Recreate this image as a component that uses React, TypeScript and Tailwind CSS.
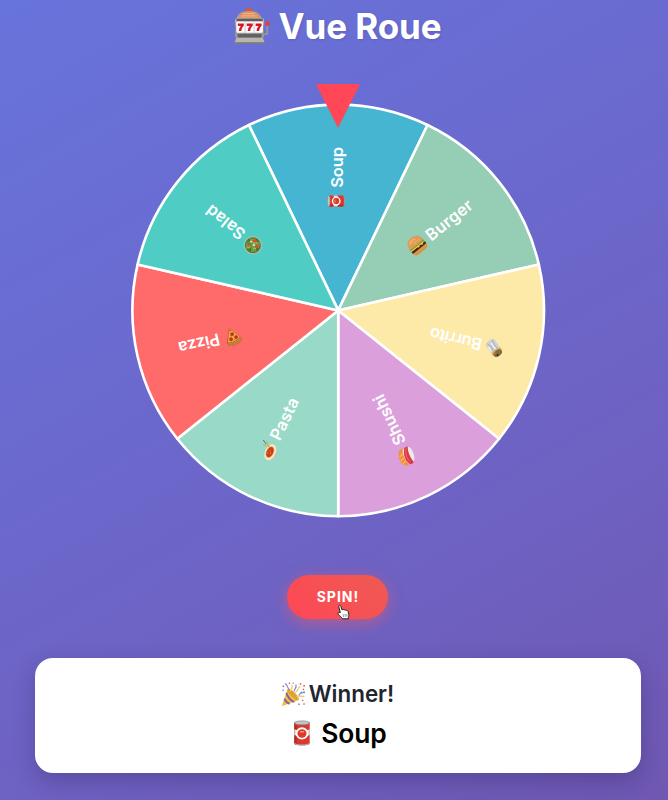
import React from "react";

type IconProps = { x?: number; y?: number; size?: number; className?: string };

function Icon({ x, y, size = 17, className, children }: IconProps & { children: React.ReactNode }) {
  return (
    <svg x={x} y={y} width={size} height={size} viewBox="0 0 32 32" className={className}>
      {children}
    </svg>
  );
}

function SlotMachine(p: IconProps) {
  return (
    <Icon {...p}>
      <defs>
        <linearGradient id="slotMetal" x1="0" x2="0" y1="0" y2="1">
          <stop offset="0" stopColor="#d8d0c4" />
          <stop offset="0.5" stopColor="#8d8a86" />
          <stop offset="1" stopColor="#a5a29c" />
        </linearGradient>
      </defs>
      <ellipse cx="13" cy="2" rx="3.200" ry="1.900" fill="#d8563d" />
      <path d="M3 9c.3-3.500 3-5.800 10-5.800s9.800 2.300 10.200 5.800z" fill="#e08a55" stroke="#b8aaa0" strokeWidth=".8" />
      <path d="M8 4.800h10M6 6.800h14" stroke="#f6b47d" strokeWidth="1" />
      <rect x="1" y="8.500" width="25" height="18" rx="3" fill="url(#slotMetal)" />
      <rect x="2" y="9" width="23" height="2.300" rx="1" fill="#5d5d60" />
      <rect x="2" y="11.800" width="23" height="9.700" rx="1" fill="#fff" />
      <path d="M9.600 11.800v9.700M17.300 11.800v9.700" stroke="#bbb" strokeWidth=".7" />
      <path
        d="M3.300 13.300h5.200v2c-1.500 1.500-2 2.500-2.100 4.500H4.200c.1-1.800.6-3 1.800-4.200H3.300zM11 13.300h5.200v2c-1.500 1.500-2 2.500-2.100 4.500h-2.200c.1-1.800.6-3 1.800-4.200H11zM18.700 13.300h5.200v2c-1.500 1.500-2 2.500-2.100 4.500h-2.200c.1-1.800.6-3 1.800-4.200h-2.700z"
        fill="#dc1226"
      />
      <rect x="3" y="22.500" width="21" height="3" rx="1" fill="#606164" />
      <path d="M2 26h23l1.700 4.500H.3z" fill="#b9b7ad" />
      <path d="M.3 30.200h26.500" stroke="#77756f" strokeWidth="1.200" />
      <path d="M26 22.500h2.800V15" fill="none" stroke="#98969a" strokeWidth="1.500" />
      <circle cx="28.900" cy="13.500" r="2.100" fill="#e23f3d" />
    </Icon>
  );
}

function Can(p: IconProps) {
  return (
    <Icon {...p}>
      <path d="M6.500 3.500v25c0 3.500 19 3.500 19 0v-25z" fill="#d9392e" />
      <path d="M6.500 3.500v25c0 1.300 1.400 2 3 2.400V3.500z" fill="#b52a24" />
      <path d="M6.500 11.500c4 2 15 2 19 0v7c-4 2-15 2-19 0z" fill="#e4dcd6" />
      <circle cx="16" cy="16.500" r="7.600" fill="#fff" />
      <ellipse cx="16" cy="16.500" rx="5.600" ry="5.200" fill="#dc3b2b" />
      <path d="M13.500 15c2-1.500 3.500-.5 5-.2" stroke="#ff9c83" strokeWidth="1.500" fill="none" />
      <ellipse cx="16" cy="3.500" rx="9.500" ry="2.400" fill="#c0c5c6" stroke="#85898b" strokeWidth=".9" />
      <path d="M6.500 28.500c2 3 17 3 19 0" fill="none" stroke="#b1aaa7" strokeWidth="1.300" />
    </Icon>
  );
}

function Burger(p: IconProps) {
  return (
    <Icon {...p}>
      <path d="M1 23h30c0 5-3 8-7 8H8c-4 0-7-3-7-8z" fill="#d99448" />
      <rect x=".8" y="19.500" width="30.400" height="4.500" rx="2.200" fill="#4b2517" />
      <path d="M1 17h30l-7 5-4-3-3 3-3-2H2z" fill="#f8c932" />
      <path d="M.5 16c2-2 4 1 6-.5s4 1.500 6 0 4 1.500 6 0 4 1.500 6 0 4 1 7 .5v2H.5z" fill="#67a23b" />
      <path d="M1 15C1 6 7 .5 16 .5S31 6 31 15c0 1.500-30 1.500-30 0z" fill="#e29a54" />
      <path d="M6 9c3-4 8-5 13-4" stroke="#f3b870" strokeWidth="2" fill="none" />
      <path d="M11 8h2M18 7h2M22 11h2M15 11h2" stroke="#ffe5ae" strokeWidth="1.400" />
    </Icon>
  );
}

function Burrito(p: IconProps) {
  return (
    <Icon {...p}>
      <g transform="rotate(-48 16 16)">
        <path d="M7 8h18v22c-4 3-14 3-18 0z" fill="#cfd1d3" />
        <path d="M11 13l2 6-2 11M21 14l-2 6 2 9" stroke="#999da0" strokeWidth="1.200" fill="none" />
        <path d="M15 13v14M23 14v10" stroke="#f4f5f5" strokeWidth="2" />
        <path d="M6.500 10C5-1.500 27-1.500 25.500 10c-3 5-16 5-19 0z" fill="#d9ad70" />
        <ellipse cx="16" cy="5.800" rx="8" ry="5.200" fill="#5f7b3b" />
        <circle cx="12.500" cy="6" r="2.700" fill="#d34833" />
        <circle cx="18" cy="3.500" r="2" fill="#49301f" />
        <circle cx="19.500" cy="8" r="2" fill="#e05a40" />
      </g>
    </Icon>
  );
}

function Sushi(p: IconProps) {
  return (
    <Icon {...p}>
      <path d="M3 9c7-5 18-4 26 4v8H4z" fill="#fbf0e0" />
      <path d="M1 13C3 3 16 0 27 7c4 2 5 6 4 10-8-5-16-6-28-2z" fill="#f1923a" />
      <path d="M7 6l3 6M13 4l3 7M20 5l3 8" stroke="#ffd39a" strokeWidth="1.300" />
      <path d="M2 21c8-3 20-1 28 3 0 5-4 6-9 6-9 0-18-2-19-9z" fill="#f0eae6" />
      <path d="M1 17c7-6 21-5 30 3v6c-9-4-19-5-29-2-1-2-2-4-1-7z" fill="#d9364a" />
      <path d="M4 19c8-4 17-2 25 3" stroke="#f2747d" strokeWidth="1.300" fill="none" />
    </Icon>
  );
}

function Pasta(p: IconProps) {
  return (
    <Icon {...p}>
      <ellipse cx="15" cy="22.500" rx="14.500" ry="9" fill="#cfc6aa" />
      <ellipse cx="15" cy="20.500" rx="14.500" ry="9" fill="#f4ebd0" />
      <ellipse cx="15" cy="20" rx="10.800" ry="6.600" fill="#e8a558" />
      <ellipse cx="15" cy="19.800" rx="9.200" ry="5.700" fill="#c54019" />
      <path d="M11 18l2-2M16 18l3 1M12 22l4-1" stroke="#ed793e" strokeWidth="1.500" />
      <path d="M23 11L29 0" stroke="#5f6a7c" strokeWidth="1.500" />
      <path d="M20.500 14l2.500-7 4 2-3 7" fill="#e0b955" />
      <path d="M22 8l-1-4M27 10l3-3" stroke="#9e9d78" strokeWidth="1" />
    </Icon>
  );
}

function Pizza(p: IconProps) {
  return (
    <Icon {...p}>
      <g transform="rotate(-16 16 16)">
        <path d="M3 6C9 0 22-1 30 6l-1 6L14 33z" fill="#9d5529" />
        <path d="M5 10c7-4 15-3 23 1L14 32z" fill="#f0a93c" />
        <path d="M3 6C9 0 22-1 30 6l-2 5C21 6 12 6 5 10z" fill="#c97c37" />
        <circle cx="11" cy="12.500" r="3.300" fill="#c9302b" />
        <circle cx="20.500" cy="13.500" r="3.300" fill="#c9302b" />
        <circle cx="14.500" cy="20.500" r="3.200" fill="#c9302b" />
        <circle cx="14.500" cy="27.500" r="1.600" fill="#d84234" />
        <path d="M15 10h2M18 18v2" stroke="#5a7c31" strokeWidth="1.400" />
      </g>
    </Icon>
  );
}

function Salad(p: IconProps) {
  return (
    <Icon {...p}>
      <circle cx="16" cy="16" r="16" fill="#b0bcb1" />
      <circle cx="16" cy="16" r="13.800" fill="#4b7f34" />
      <path d="M5 11l6-6 4 4 6-5 7 8-5 6 4 4-7 6-5-4-6 4-4-9 4-3z" fill="#6f9c45" />
      <path d="M8 15l5-3M13 24l6-5M18 9l4-2" stroke="#aac770" strokeWidth="1.600" />
      <path d="M6 15l5 3M14 5l2 6M24 12l-4 4M16 28l3-5" stroke="#315f29" strokeWidth="1.300" />
      <circle cx="9" cy="18.500" r="3" fill="#e34b30" />
      <circle cx="18" cy="24" r="3" fill="#e34b30" />
      <circle cx="22" cy="12" r="2" fill="#e34b30" />
      <circle cx="15" cy="17.500" r="2" fill="#dde5a8" />
      <circle cx="22.500" cy="19" r="1.800" fill="#dde5a8" />
    </Icon>
  );
}

function Party(p: IconProps) {
  return (
    <Icon {...p}>
      <path d="M1 31L8 9c3 5 9 11 15 14z" fill="#f4bd42" />
      <path d="M7 14c1 5 6 10.500 10 11.500M4.500 21.500c1 3 3.500 5.500 6.500 6.500" stroke="#8060a8" strokeWidth="2.400" fill="none" />
      <ellipse cx="15.500" cy="16" rx="3" ry="9.800" transform="rotate(-46 15.500 16)" fill="#dda136" />
      <path d="M12 12c0-4 4-4 2-8M17 14c6-1 3-7 8-8M20 19c4-3 6 1 10-1" fill="none" stroke="#f3cb61" strokeWidth="1.700" />
      <path d="M11 10c-4-3-1-5-6-8M17 12c-1-3 4-4 2-9M23 17c2-5 5-1 7-5" fill="none" stroke="#7b83dd" strokeWidth="1.500" />
      <path d="M2 5l2 1M10 1l1.500 1M24 2l2 1M30 4l-1 2M28 9l1.500 1M27 23l1.500 1M29 29l1-1.500" stroke="#e45369" strokeWidth="1.800" />
      <path d="M15 1l1 1M29 14l1.500-1M25 14l2-1M22 28l2 1M2 11l1.500-1" stroke="#6990df" strokeWidth="1.700" />
    </Icon>
  );
}

// Each label sits along its slice's bisector; flipped labels read toward the hub.
const slices = [
  { label: "Soup", color: "#45b5d1", width: 41, flip: false, Pic: Can },
  { label: "Burger", color: "#96cdb5", width: 55, flip: false, Pic: Burger },
  { label: "Burrito", color: "#fde9a8", width: 53, flip: true, Pic: Burrito },
  { label: "Shushi", color: "#dba0dc", width: 54, flip: true, Pic: Sushi },
  { label: "Pasta", color: "#99d9c8", width: 45, flip: true, Pic: Pasta },
  { label: "Pizza", color: "#ff6b6b", width: 42, flip: false, Pic: Pizza },
  { label: "Salad", color: "#4fcdc5", width: 45, flip: false, Pic: Salad },
];

const STEP = 360 / slices.length;
const RADIUS = 205.8;

function rim(deg: number) {
  const a = (deg * Math.PI) / 180;
  return `${RADIUS * Math.cos(a)} ${RADIUS * Math.sin(a)}`;
}

function Wheel() {
  return (
    <svg width="416" height="416" viewBox="-208.200 -208.400 416 416" className="block">
      {slices.map((s, i) => {
        const mid = -90 + i * STEP;
        return (
          <path
            key={s.label}
            d={`M0 0L${rim(mid - STEP / 2)}A${RADIUS} ${RADIUS} 0 0 1 ${rim(mid + STEP / 2)}Z`}
            fill={s.color}
            stroke="#fff"
            strokeWidth="2.6"
            strokeLinejoin="round"
          />
        );
      })}
      {slices.map((s, i) => {
        const total = s.width + 21.5;
        const start = (s.flip ? -132 : 132) - total / 2;
        return (
          <g key={s.label} transform={`rotate(${-90 + i * STEP + (s.flip ? 180 : 0)})`}>
            <s.Pic x={start - 0.7} y={-11.5} size={18.5} />
            <text x={start + 21.8} y={4.3} textLength={s.width} className="fill-white text-[16.5px] font-semibold">
              {s.label}
            </text>
          </g>
        );
      })}
    </svg>
  );
}

function HandCursor() {
  return (
    <svg width="13" height="17" viewBox="0 0 13 17" className="absolute left-[50px] top-[29px]">
      <path
        d="M3.300 8.600L1.800 2.700c-.4-1.600 1.500-2 2-.6l1.300 4c.3-.9 1.700-.9 2 0 .5-.7 1.700-.5 2 .4.800-.5 1.800 0 2 .9l.7 3.200c.2 1.600-.5 2-.5 4.200H5.500c-.6-1.600-2.900-2.800-4.300-4.500-.9-1.200.6-2.300 2.100-1.700z"
        fill="#fff"
        stroke="#222"
        strokeWidth="1"
      />
      <path d="M6.200 10.200l.4 2.800M8 10l.4 2.800M9.800 9.800l.3 2.800" stroke="#555" strokeWidth=".6" />
    </svg>
  );
}

export default function App() {
  return (
    <main className="flex h-[800px] w-[668px] flex-col items-center overflow-hidden bg-[linear-gradient(150deg,#6774db_0%,#6b69ce_40%,#6e61c1_70%,#6f58b2_100%)] pl-2 font-['Inter',sans-serif]">
      <h1 className="flex h-[52px] items-center gap-[8px] pr-[2px] text-[35px] font-bold leading-none text-white [text-shadow:1px_1px_3px_rgba(0,0,0,.12)]">
        <SlotMachine size={37} className="ml-px" />
        <span className="tracking-[-0.1px]">Vue Roue</span>
      </h1>
      <div className="relative mt-[50px]">
        <Wheel />
        <div className="absolute -top-[18px] left-[186px] h-[44px] w-[44px] bg-[#ff4757] [clip-path:polygon(0_0,100%_0,50%_100%)]" />
      </div>
      <button className="relative mr-px mt-[57px] h-[44px] w-[101px] rounded-full bg-[linear-gradient(45deg,#ff4757,#ee5a52)] pl-px text-[14px] font-bold leading-none tracking-[1px] text-white shadow-[0_4px_15px_rgba(255,90,95,.5)]">
        SPIN!
        <HandCursor />
      </button>
      <section className="mt-[39px] flex h-[115px] w-[606px] flex-col items-center rounded-[18px] bg-white shadow-[0_8px_22px_rgba(40,25,90,.3)]">
        <h2 className="mt-[22px] flex h-[28px] items-center gap-[3px] pr-px text-[22.4px] font-semibold leading-none text-[#22252d]">
          <Party size={25} />
          <span>Winner!</span>
        </h2>
        <p className="mt-[7px] flex h-[36px] items-center gap-[6px] text-[26.4px] font-semibold leading-none tracking-[-0.100px] text-black">
          <Can size={26} />
          <span>Soup</span>
        </p>
      </section>
    </main>
  );
}
